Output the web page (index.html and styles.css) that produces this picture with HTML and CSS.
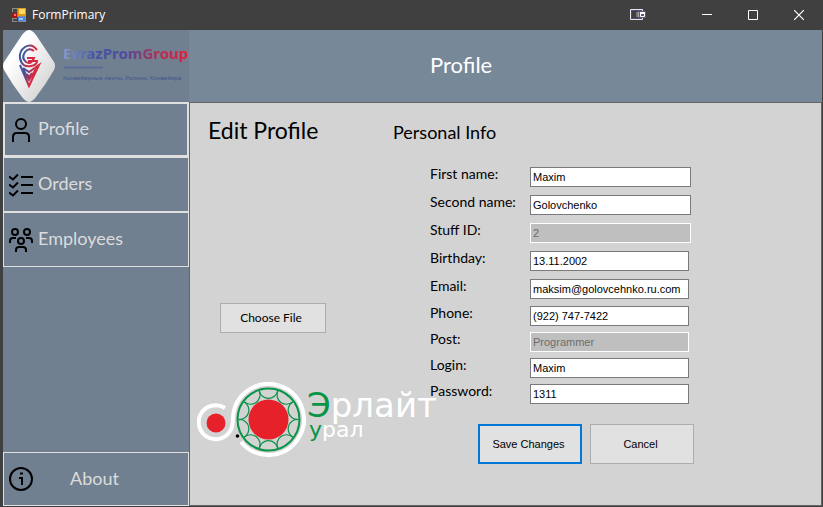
FILE: index.html
```
<!DOCTYPE html>
<html lang="en">
<head>
<meta charset="utf-8">
<title>FormPrimary</title>
<link rel="stylesheet" href="styles.css">
</head>
<body>
<div class="window">
  <header class="titlebar">
    <svg class="app-icon" width="14" height="14" viewBox="0 0 14 14" aria-hidden="true">
      <path d="M0 0h14v14H0z" fill="#8c8c8c"/>
      <path d="M1 1h4v3H1zM1 11h4v2H1zM0 4h5v1H0zM5 9h1v5H5z" fill="#454545"/>
      <path d="M0 5h5v5H0z" fill="#a31616"/><path d="M2 6h2v2H2z" fill="#ff7a68"/>
      <path d="M6 0h8v8H6z" fill="#dd9a10"/><path d="M7 1h6v5H7z" fill="#ffd75e"/>
      <path d="M6 9h7v4H6z" fill="#4886e4"/><path d="M7 10h4v2H7z" fill="#9cc4ff"/>
    </svg>
    <span class="title">FormPrimary</span>
    <button class="tool" aria-label="Display options">
      <svg width="17" height="12" viewBox="0 0 17 12"><path d="M12.500 2.500V.5H.5v10h12V9" fill="none" stroke="#e8e8ee"/><path d="M1.500 1.500h10v8h-10z" fill="none" stroke="#4c4f70"/><path d="M6 3h2v5H6z" fill="#777"/><path d="M8 2h8v7H8z" fill="#555a80"/><path d="M8.500 3v5" stroke="#aaa"/><path d="M10.500 4h4v3.500h-4z" fill="#555a80" stroke="#fff"/><path d="M10 4h5" stroke="#fff" stroke-width="2"/></svg>
    </button>
    <button class="caption" aria-label="Minimize"><svg width="10" height="10" viewBox="0 0 10 10"><path d="M0 4.500h10" stroke="#fff"/></svg></button>
    <button class="caption" aria-label="Maximize"><svg width="10" height="10" viewBox="0 0 10 10"><path d="M.5.5h9v9h-9z" fill="none" stroke="#fff"/></svg></button>
    <button class="caption" aria-label="Close"><svg width="10" height="10" viewBox="0 0 10 10"><path d="M0 0l10 10M10 0L0 10" stroke="#fff" stroke-width="1.200"/></svg></button>
  </header>

  <aside class="sidebar">
    <svg class="brand" width="186" height="72" viewBox="0 0 186 72" role="img" aria-label="EvrazPromGroup">
      <defs>
        <linearGradient id="name" x1="0" x2="1"><stop offset="0" stop-color="#8c9ad0"/><stop offset=".25" stop-color="#4453a6"/><stop offset=".5" stop-color="#4f4a9c"/><stop offset=".75" stop-color="#b03058"/><stop offset="1" stop-color="#e0223c"/></linearGradient>
        <linearGradient id="mark" x1="0" x2="1" y2=".4"><stop offset=".3" stop-color="#3f559c"/><stop offset=".75" stop-color="#d8283f"/></linearGradient>
        <linearGradient id="plate" x1="0" x2="1" y2="1"><stop offset=".3" stop-color="#fff"/><stop offset="1" stop-color="#c9c9c9"/></linearGradient>
      </defs>
      <path d="M26 0Q29 0 33 5Q43 20 51 32Q53 36 51 40Q43 54 33 67Q29 72 26 72Q23 72 19 67Q9 54 1 40Q-1 36 1 32Q9 20 19 5Q23 0 26 0Z" fill="url(#plate)"/>
      <g fill="none" stroke="url(#mark)" stroke-width="2">
        <path d="M34 20Q29 13 22 17Q16 21 17 28Q19 38 28 36Q34 35 34 31H25"/>
        <path d="M31 21Q26 17 22 22Q18 28 23 32Q28 35 31 28H24"/>
        <path d="M17 35L26 56L36 35L26 42L20 38M20 39L26 50L33 39M24 44L26 47L29 43"/>
      </g>
      <text class="brand-name" x="60" y="29" fill="url(#name)">EvrazPromGroup</text>
      <path d="M61 37.500h39" stroke="#5c6b96" stroke-width="2"/>
      <text class="brand-sub" x="60" y="50" fill="#43568e">Конвейерные ленты, Ролики, Конвейера</text>
    </svg>
    <nav class="menu">
      <button class="item current">
        <svg width="24" height="24" viewBox="0 0 24 24"><circle cx="12" cy="6" r="5"/><path d="M4 24v-5q0-4 4-4h8q4 0 4 4v5"/></svg>
        <span>Profile</span>
      </button>
      <button class="item">
        <svg width="24" height="24" viewBox="0 0 24 24"><path d="M0 3.500l4 3 5-5M0 11.500l4 3 5-5M0 19.500l4 3 5-5M12 4h12M12 12h12M12 20h12"/></svg>
        <span>Orders</span>
      </button>
      <button class="item">
        <svg width="24" height="24" viewBox="0 0 24 24"><circle cx="6" cy="4" r="3"/><circle cx="18" cy="4" r="3"/><circle cx="12" cy="13" r="3"/><path d="M1 15v-2q0-3 3-3h3M23 15v-2q0-3-3-3h-3M7 24v-2q0-3 3-3h4q3 0 3 3v2"/></svg>
        <span>Employees</span>
      </button>
      <button class="item about">
        <svg width="24" height="24" viewBox="0 0 24 24"><circle cx="12" cy="12" r="11"/><path d="M10 11h3v7M11 6.500h3"/></svg>
        <span>About</span>
      </button>
    </nav>
  </aside>

  <div class="heading"><h1>Profile</h1></div>

  <main class="content">
    <section class="picture">
      <h2>Edit Profile</h2>
      <button class="button file">Choose File</button>
      <svg class="partner" width="264" height="76" viewBox="0 0 264 76" role="img" aria-label="Эрлайт Урал">
        <path d="M28 26A17 17 0 1 0 35 45Q36 40 36 35A35.500 35.500 0 1 1 44 60" fill="none" stroke="#fff" stroke-width="4"/>
        <circle cx="19" cy="41" r="9.500" fill="#e62129"/>
        <circle cx="71.500" cy="37.500" r="31" fill="none" stroke="#079447" stroke-width="2"/>
        <g id="petals" fill="none" stroke="#079447" stroke-width="1.200"></g>
        <circle cx="71.500" cy="37.500" r="20" fill="#e62129"/>
        <circle cx="40.500" cy="54" r="1.800" fill="#000"/>
        <text class="partner-name" x="110" y="35"><tspan class="green">Э</tspan>рлайт</text>
        <text class="partner-sub" x="112" y="55"><tspan class="green">у</tspan>рал</text>
      </svg>
    </section>

    <form class="details">
      <h3>Personal Info</h3>
      <div class="fields">
        <label for="first">First name:</label><input class="wide" id="first" value="Maxim">
        <label for="second">Second name:</label><input class="wide" id="second" value="Golovchenko">
        <label for="staff">Stuff ID:</label><input class="wide" id="staff" value="2" disabled>
        <label for="birthday">Birthday:</label><input id="birthday" value="13.11.2002">
        <label for="email">Email:</label><input id="email" value="maksim@golovcehnko.ru.com">
        <label for="phone">Phone:</label><input id="phone" value="(922) 747-7422">
        <label for="post">Post:</label><input id="post" value="Programmer" disabled>
        <label for="login">Login:</label><input id="login" value="Maxim">
        <label for="password">Password:</label><input id="password" value="1311">
      </div>
      <div class="actions">
        <button type="button" class="button primary">Save Changes</button>
        <button type="button" class="button">Cancel</button>
      </div>
    </form>
  </main>
</div>
<script src="petals.js"></script>
</body>
</html>
```
FILE: petals.js
```
// Ring of arcs between the outer circle and the centre disc of the partner logo.
const ring = document.getElementById("petals");
const count = 10;
const point = (i) => {
  const angle = (i / count) * Math.PI * 2;
  return `${71.5 + 30 * Math.cos(angle)} ${37.5 + 30 * Math.sin(angle)}`;
};
for (let i = 0; i < count; i++) {
  const arc = document.createElementNS("http://www.w3.org/2000/svg", "path");
  arc.setAttribute("d", `M${point(i)}A9.5 9.5 0 0 0 ${point(i + 1)}`);
  ring.append(arc);
}
```
FILE: styles.css
```
* { box-sizing: border-box; }
body { margin: 0; background: #4d4d4d; font-family: Lato, "Noto Sans", sans-serif; }
h1, h2, h3 { margin: 0; font-weight: 400; }
button, input { font: inherit; }

.window {
  display: grid;
  grid-template: 30px 72px 1fr / 186px 1fr;
  min-height: 100vh;
  padding: 0 1px 1px 3px;
  background: #404040;
}

.titlebar {
  grid-column: 1 / -1;
  display: flex;
  align-items: center;
  padding-left: 9px;
  color: #fff;
}
.title { flex: 1; margin-left: 6px; font: 12px/16px "Open Sans", "Noto Sans", sans-serif; }
.tool, .caption {
  display: flex;
  align-items: center;
  justify-content: center;
  height: 28px;
  padding: 0;
  border: 0;
  background: none;
}
.tool { width: 48px; margin-right: 22px; }
.caption { width: 46px; }

.sidebar {
  grid-row: 2 / 4;
  display: flex;
  flex-direction: column;
  background: #708090;
}
.brand { display: block; }
.brand-name { font: 700 15px "Noto Sans", sans-serif; }
.brand-sub { font: 6px "Noto Sans", sans-serif; }

.menu { flex: 1; display: flex; flex-direction: column; }
.item {
  display: flex;
  align-items: center;
  gap: 5px;
  height: 55px;
  padding: 0 5px;
  border: 1px solid #e0e0e0;
  background: #708090;
  color: #dcdcdc;
  font-size: 18px;
  line-height: 24px;
}
.item span { padding-bottom: 3px; }
.item.current { border-width: 2px; padding: 0 4px; }
.item.about { height: 54px; margin-top: auto; gap: 37px; }
.item svg { fill: none; stroke: #000; stroke-width: 2; }

.heading {
  display: flex;
  align-items: center;
  padding-left: 241px;
  background: #778899;
  color: #fff;
}
.heading h1 { font-size: 22px; line-height: 26px; padding-bottom: 2px; }

.content {
  display: grid;
  grid-template-columns: 203px 1fr;
  border: 1px solid #646464;
  background: #d3d3d3;
  color: #000;
}
.picture { padding: 13px 0 0 7px; }
.picture h2 { padding-left: 11px; font-size: 23px; line-height: 28px; }
.button {
  display: block;
  width: 104px;
  height: 40px;
  padding: 0;
  border: 1px solid #adadad;
  background: #e1e1e1;
  color: #000;
}
.button.primary { border: 2px solid #0078d7; }
.button.file { width: 106px; height: 30px; margin: 159px 0 49px 23px; padding: 0 4px 2px 0; font-size: 12px; }
.partner { display: block; }
.partner-name, .partner-sub { font: 34px "DejaVu Sans", sans-serif; fill: #fff; }
.partner-sub { font-size: 22px; }
.green { fill: #079447; }

.details { padding-top: 18px; }
.details h3 { font-size: 18px; line-height: 22px; }
.fields {
  display: grid;
  grid-template: repeat(4, 28px) 27px repeat(4, 26px) / 100px 161px;
  margin: 24px 0 14px 37px;
}
.fields label { font-size: 14px; line-height: 14px; }
.fields input {
  width: 159px;
  height: 20px;
  padding: 0 2px;
  border: 1px solid #7a7a7a;
  border-radius: 0;
  background: #fff;
  color: #000;
  font: 11px "Liberation Sans", Arial, sans-serif;
}
.fields .wide { width: 161px; }
.fields input:disabled {
  border: 1px solid #fff;
  background: #bfbfbf;
  color: #6d6d6d;
}
.actions { display: flex; gap: 8px; padding-left: 85px; }
.actions .button { padding-right: 3px; font: 11px "Liberation Sans", Arial, sans-serif; }
```
